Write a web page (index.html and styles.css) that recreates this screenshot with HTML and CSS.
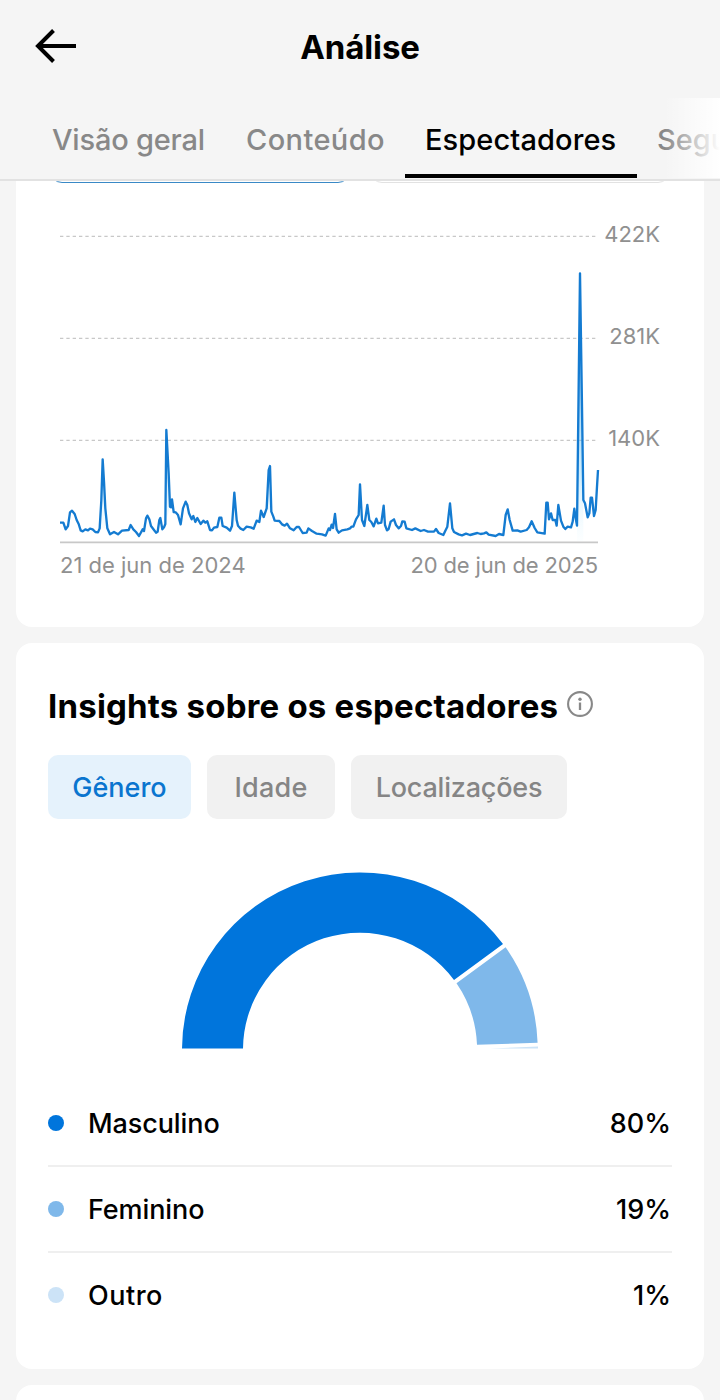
FILE: index.html
```html
<!DOCTYPE html>
<html lang="pt-BR">
<head>
<meta charset="utf-8">
<title>Análise</title>
<link rel="stylesheet" href="styles.css">
</head>
<body>
<div class="screen">
  <header class="header">
    <div class="titlebar">
      <svg class="back" viewBox="0 0 42 36" width="42" height="36"><path d="M18.500 2.500 3 18l15.500 15.500M3 18H41" fill="none" stroke="#000" stroke-width="4"/></svg>
      <h1 class="title">Análise</h1>
    </div>
    <nav class="tabs">
      <span class="tab t-geral">Visão geral</span>
      <span class="tab t-cont">Conteúdo</span>
      <span class="tab t-esp active">Espectadores</span>
      <span class="tab t-seg">Seguidores</span>
      <span class="fade"></span>
    </nav>
  </header>
  <main class="content">
    <section class="card chart-card">
      <div class="metrics"><div class="metric selected"></div><div class="metric"></div></div>
      <div class="chart">
        <div class="plot">
          <svg viewBox="0 -600 1620 990" width="540" height="330">
            <defs>
              <linearGradient id="area" x1="0" y1="0" x2="0" y2="1">
                <stop offset="0" stop-color="#0a7ad8" stop-opacity=".7"/>
                <stop offset=".75" stop-color="#5fc4f5" stop-opacity=".3"/>
                <stop offset="1" stop-color="#b8ecff" stop-opacity=".04"/>
              </linearGradient>
            </defs>
            <path class="grid" d="M0-551H1614M0-245H1614M0 61H1614"/>
            <path class="axis" d="M0 367H1614"/>
            <path fill="url(#area)" d="M1551 317 1560-440 1566-40 1570 240 1570 364 1551 364ZM119 325 128 118 136 265 142 325ZM316 312 319 30 326 160 330 260ZM518 318 523 218 529 300ZM620 265 626 150 630 138 634 275ZM896 285 900 193 906 300Z"/>
            <polyline class="series" points="0,308 10,308 17,328 24,318 30,277 36,272 44,282 50,300 56,312 62,331 68,334 76,328 84,331 90,326 98,328 106,336 114,337 119,325 124,240 128,118 132,185 136,265 142,325 150,343 162,336 174,343 186,332 206,330 212,315 220,328 228,336 237,348 248,328 252,333 258,295 262,287 268,298 273,318 282,330 288,338 293,335 298,300 301,294 307,328 312,322 316,312 319,30 326,160 330,260 333,262 336,238 341,276 347,277 354,285 362,313 369,265 377,245 382,255 387,280 395,298 400,288 406,306 412,294 422,312 430,302 436,308 442,304 450,330 456,331 462,323 472,321 478,293 484,293 488,318 500,323 510,332 516,318 523,218 530,300 534,317 542,326 550,330 560,320 572,322 581,326 590,302 598,306 603,272 611,291 620,265 626,150 630,138 634,275 640,290 644,302 658,303 666,313 674,317 681,311 690,325 701,331 710,321 717,321 728,339 740,338 745,325 756,333 770,341 786,343 797,347 806,325 810,330 815,314 819,324 825,282 830,328 836,338 846,331 862,328 870,325 875,320 880,320 888,298 896,285 900,193 906,300 913,318 922,255 928,300 934,306 941,319 949,296 954,310 964,308 971,257 975,315 981,331 986,327 992,305 1002,298 1008,315 1016,325 1023,318 1027,304 1034,305 1039,325 1056,330 1066,325 1082,333 1092,330 1104,335 1122,335 1128,327 1136,339 1150,345 1156,332 1162,320 1170,250 1177,325 1182,336 1196,343 1206,346 1218,341 1230,345 1252,339 1262,342 1272,340 1279,337 1286,344 1307,348 1317,342 1330,345 1337,285 1343,268 1349,300 1358,332 1372,331 1382,335 1400,330 1407,322 1415,304 1424,324 1432,337 1454,341 1459,248 1463,248 1467,298 1473,280 1478,300 1486,300 1490,317 1495,255 1503,302 1510,320 1516,327 1523,320 1533,322 1538,305 1543,266 1548,300 1551,317 1560,-440 1566,-40 1570,240 1575,250 1583,292 1588,280 1592,233 1596,233 1602,288 1607,270 1611,200 1614,150"/>
          </svg>
          <div class="dates"><span>21 de jun de 2024</span><span class="to">20 de jun de 2025</span></div>
        </div>
        <div class="scale"><span>422K</span><span>281K</span><span>140K</span></div>
      </div>
    </section>
    <section class="card insights">
      <div class="heading">
        <h2>Insights sobre os espectadores</h2>
        <svg class="info" viewBox="0 0 26 26" width="26" height="26"><circle cx="13" cy="13" r="11.900" fill="none" stroke="#888" stroke-width="2.100"/><circle cx="13" cy="8.200" r="1.700" fill="#888"/><path d="M13 11.500V19" stroke="#888" stroke-width="2.300"/></svg>
      </div>
      <div class="chips"><span class="chip c1 on">Gênero</span><span class="chip c2">Idade</span><span class="chip c3">Localizações</span></div>
      <svg class="gauge" viewBox="180 870 360 182" width="360" height="182">
        <path fill="#0075dc" d="M182 1048.500A178 177 0 0 1 503 944L454 980A117 117 0 0 0 243 1048.500Z"/>
        <path fill="#7fb8ea" d="M505.600 947.300A178 178 0 0 1 537.600 1042.800L477 1044.800A117 117 0 0 0 456.500 983.300Z"/>
        <path fill="#cce3f7" d="M490 1048.500 538 1046.600V1048.500Z"/>
      </svg>
      <ul class="legend">
        <li><i class="dot male"></i><span class="n1">Masculino</span><b>80%</b></li>
        <li><i class="dot female"></i><span class="n2">Feminino</span><b>19%</b></li>
        <li><i class="dot other"></i><span class="n3">Outro</span><b>1%</b></li>
      </ul>
    </section>
    <section class="card next"></section>
  </main>
</div>
</body>
</html>
```
FILE: styles.css
```css
* { box-sizing: border-box; }
body { margin: 0; background: #f5f5f5; font-family: Inter, "Liberation Sans", sans-serif; color: #000; }
.screen { width: 720px; height: 1400px; overflow: hidden; display: flex; flex-direction: column; }
.header { flex: none; height: 181px; border-bottom: 2px solid #e2e2e2; }
.titlebar { height: 98px; display: grid; grid-template-columns: 80px 1fr 80px; align-items: start; }
.back { margin: 28px 0 0 35px; }
.title { margin: 28px 0 0; text-align: center; font-size: 33px; line-height: 39px; font-weight: 700; letter-spacing: -.1px; }
.tabs { position: relative; display: flex; height: 81px; padding-left: 32px; overflow: hidden; }
.tab { flex: none; height: 80px; padding: 0 20px; font-size: 29px; line-height: 83px; color: #888; white-space: nowrap; font-weight: 450; }
.t-geral { width: 194px; letter-spacing: -.2px; }
.t-cont { width: 179px; letter-spacing: .4px; }
.t-esp { width: 232px; letter-spacing: .1px; }
.t-esp.active { color: #000; font-weight: 500; border-bottom: 4px solid #000; }
.fade { position: absolute; right: 0; top: 0; width: 56px; height: 80px; background: linear-gradient(to right, rgba(255,255,255,0), #fff); }
.content { padding: 0 16px; display: flex; flex-direction: column; gap: 16px; }
.card { flex: none; background: #fff; border-radius: 16px; }
.chart-card { height: 446px; border-radius: 0 0 16px 16px; }
.metrics { display: flex; gap: 20px; height: 39px; padding: 0 34px; overflow: hidden; }
.metric { flex: none; width: 300px; height: 40px; margin-top: -38px; border: 1.500px solid #e2e2e2; border-radius: 12px; }
.metric.selected { border-color: #3989c6; }
.chart { display: flex; padding-left: 44px; color: #909090; font-size: 22px; line-height: 28px; }
.plot { flex: none; width: 540px; }
.plot svg { display: block; }
.grid { stroke: #c8c8c8; stroke-width: 4; stroke-dasharray: 10 9; }
.axis { stroke: #c8c8c8; stroke-width: 5; }
.series { fill: none; stroke: #147bd1; stroke-width: 7; stroke-linejoin: round; }
.dates { display: flex; justify-content: space-between; padding-right: 2px; margin-top: 1px; }
.to { letter-spacing: -.15px; }
.scale { width: 60px; display: flex; flex-direction: column; align-items: flex-end; gap: 74px; }
.insights { height: 726px; padding: 40px 32px 0; }
.heading { display: flex; gap: 9px; height: 48px; }
h2 { margin: 0; font-size: 33px; line-height: 46px; font-weight: 700; letter-spacing: .2px; white-space: nowrap; }
.info { margin-top: 8px; flex: none; }
.chips { display: flex; gap: 16px; margin-top: 24px; }
.chip { height: 64px; border-radius: 10px; background: #f1f1f1; color: #858585; font-size: 27px; line-height: 65px; text-align: center; white-space: nowrap; font-weight: 450; }
.c1 { width: 143px; }
.c2 { width: 128px; letter-spacing: .2px; }
.c3 { width: 216px; letter-spacing: -.2px; }
.chip.on { background: #e5f2fc; color: #0a75cf; font-weight: 500; }
.gauge { display: block; margin: 51px auto 0; }
.legend { list-style: none; margin: 29px 0 0; padding: 0; }
.legend li { display: flex; align-items: center; height: 86px; border-bottom: 2px solid #efefef; font-size: 27px; font-weight: 450; letter-spacing: -.1px; }
.legend li:last-child { border: 0; height: 84px; }
.legend .n3 { letter-spacing: .5px; }
.dot { width: 16px; height: 16px; border-radius: 50%; margin-right: 24px; }
.male { background: #0075dc; }
.female { background: #7fb8ea; }
.other { background: #cce3f7; }
.legend b { margin-left: auto; padding-right: 1px; font-weight: 450; letter-spacing: 0; }
.next { height: 60px; }
```
